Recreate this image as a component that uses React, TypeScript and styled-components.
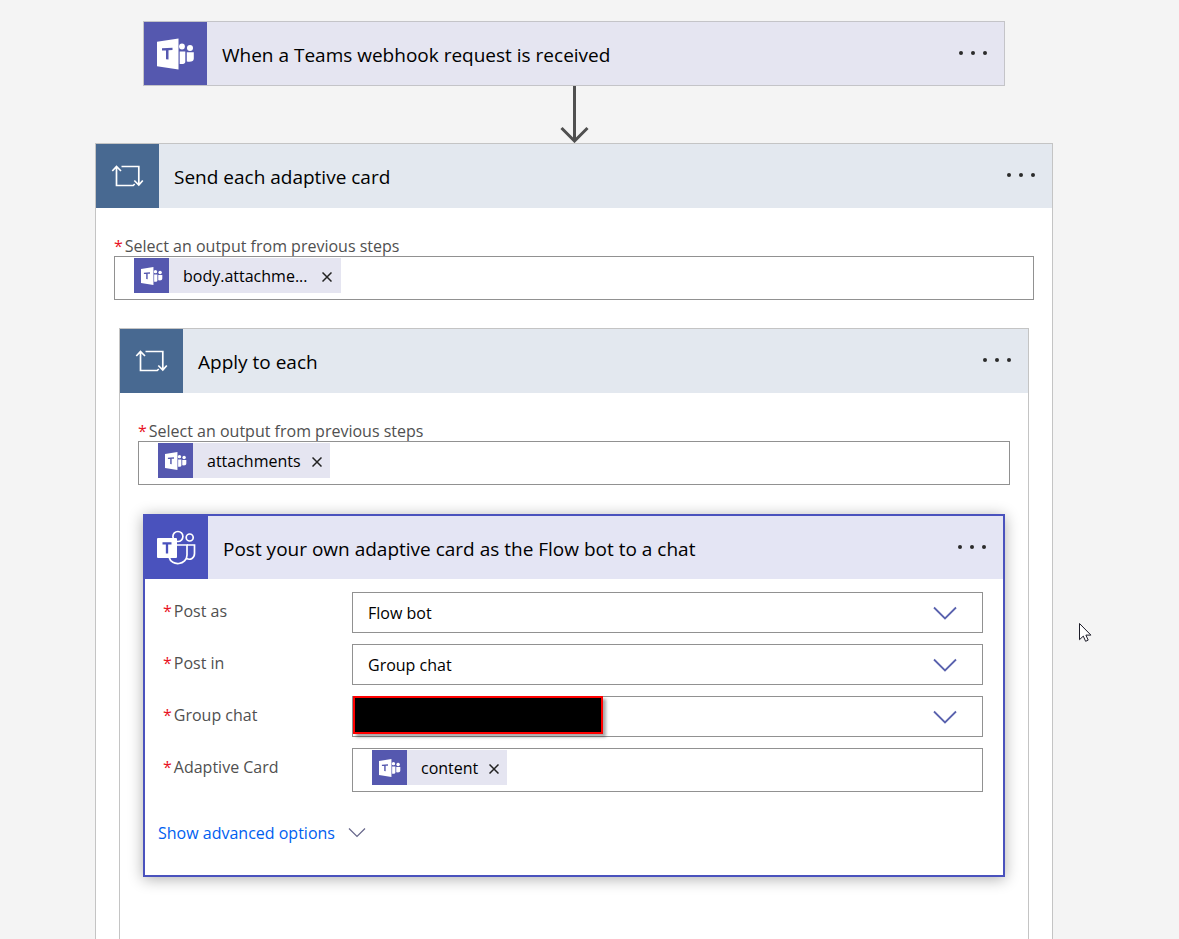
import React from "react";
import styled, { createGlobalStyle } from "styled-components";

const GlobalStyle = createGlobalStyle`
  *, *::before, *::after { box-sizing: border-box; }
  body {
    margin: 0;
    background: #f4f4f4;
    color: #000;
    font-family: "Open Sans", "Noto Sans", sans-serif;
    font-size: 16px;
    font-weight: 370;
    line-height: 22px;
  }
  button, input, select { font: inherit; color: inherit; }
`;

const Designer = styled.main`
  position: relative;
  display: flex;
  flex-direction: column;
  align-items: center;
  min-height: 100vh;
  padding: 21px 31px 0 0;
`;

const Card = styled.section`
  width: 100%;
  max-width: 862px;
  border: 1px solid #c4c4c8;
`;

const Scope = styled.section<{ $root?: boolean }>`
  display: flex;
  flex: 1;
  flex-direction: column;
  width: 100%;
  max-width: ${(p) => (p.$root ? "958px" : "none")};
  border: 1px solid #c4c4c4;
  border-bottom: 0;
  background: #fff;
`;

const ScopeBody = styled.div<{ $nested?: boolean }>`
  display: flex;
  flex: 1;
  flex-direction: column;
  padding: ${(p) => (p.$nested ? 29 : 28)}px 23px 0;
`;

const ActionCard = styled.section`
  border: 2px solid #4a52bd;
  background: #fff;
  box-shadow: 0 2px 14px rgba(0, 0, 0, 0.32);
  margin-bottom: 62px;
`;

const Header = styled.header<{ $tint: string; $tall?: boolean }>`
  display: flex;
  align-items: center;
  height: ${(p) => (p.$tall ? 64 : 63)}px;
  padding-right: 12px;
  background: ${(p) => p.$tint};
`;

const IconTile = styled.span<{ $color: string }>`
  display: grid;
  place-items: center;
  align-self: stretch;
  flex: 0 0 63px;
  background: ${(p) => p.$color};
`;

const Title = styled.h2`
  flex: 1;
  margin: 0;
  padding: 2px 15px 0;
  font-size: 19px;
  line-height: 28px;
  font-weight: inherit;
`;

const MenuButton = styled.button`
  display: grid;
  place-items: center;
  width: 38px;
  height: 32px;
  padding: 0;
  border: 0;
  background: none;
`;

const OutputField = styled.div`
  padding: 28px 18px 0;
`;

const Label = styled.label`
  display: block;
  line-height: 20px;
  color: #505050;
`;

const Star = styled.span`
  margin-right: 2px;
  color: #e81123;
`;

const TokenBox = styled.div`
  display: flex;
  align-items: flex-start;
  height: 44px;
  padding: 1px 18px 0 19px;
  border: 1px solid #919191;
  background: #fff;
`;

const TokenChip = styled.span`
  display: flex;
  align-items: center;
  height: 35px;
  background: #e5e5f1;
`;

const TokenIcon = styled.span`
  display: grid;
  place-items: center;
  width: 35px;
  height: 35px;
  background: #5558af;
`;

const TokenText = styled.span`
  padding: 0 7px 0 14px;
`;

const RemoveButton = styled.button<{ $wide?: boolean }>`
  display: grid;
  place-items: center;
  width: ${(p) => (p.$wide ? 24 : 18)}px;
  height: 35px;
  padding: 2px 0 0;
  margin-right: ${(p) => (p.$wide ? 2 : 4)}px;
  border: 0;
  background: none;
`;

const TokenInput = styled.input`
  flex: 1;
  min-width: 0;
  height: 35px;
  border: 0;
  outline: 0;
  background: none;
`;

const Form = styled.div`
  display: grid;
  gap: 11px;
  padding: 13px 20px 0 18px;
`;

const FormRow = styled.div`
  display: grid;
  grid-template-columns: 189px 1fr;
`;

const RowLabel = styled(Label)`
  padding-top: 9px;
`;

const SelectBox = styled.div`
  position: relative;
  display: flex;
  align-items: center;
  height: 41px;
  border: 1px solid #919191;
`;

const Select = styled.select`
  width: 100%;
  height: 39px;
  padding: 0 60px 0 15px;
  border: 0;
  outline: 0;
  appearance: none;
  background: none;
`;

const SelectArrow = styled.svg`
  position: absolute;
  right: 25px;
  top: 13px;
  pointer-events: none;
`;

const Redaction = styled.span`
  position: absolute;
  left: 0;
  top: -1px;
  width: 250px;
  height: 38px;
  border: 2px solid #f00;
  background: #000;
  box-shadow: 3px 3px 3px rgba(0, 0, 0, 0.35);
`;

const AdvancedButton = styled.button`
  display: flex;
  align-items: center;
  gap: 13px;
  margin: 30px 0 31px 13px;
  padding: 0;
  border: 0;
  background: none;
  color: #0060f0;
`;

const Pointer = styled.svg`
  position: absolute;
  left: 1078px;
  top: 622px;
`;

const TeamsClassic = ({ size }: { size: number }) => (
  <svg width={size} height={size} viewBox="0 0 38 38" aria-hidden="true">
    <path fill="#fff" d="M0 6.800 21.500 3.500v31L0 31.200z" />
    <path fill="#5558af" d="M5 13.200 15.500 12.700v2.400l-4 .2v9.200l-2.500-.2v-8.900l-4 .2z" />
    <circle cx="25" cy="11.500" r="2.900" fill="#fff" />
    <circle cx="33" cy="13" r="3" fill="#fff" />
    <path fill="#fff" d="M22.700 16.500h5.600v10.200c0 1.800-1.600 2.600-5.600 2.300zM29.800 17.300h7v6.200c0 2.700-2.500 3.700-7 3z" />
  </svg>
);

const TeamsOutline = () => (
  <svg width="40" height="36" viewBox="0 0 40 36" fill="none" stroke="#fff" strokeWidth="1.700" aria-hidden="true">
    <circle cx="20.900" cy="6.500" r="5" />
    <circle cx="32.700" cy="7.500" r="3.500" />
    <path d="M20 15h10v10c0 10-15.500 12-18 2v-2" />
    <path d="M30 15h7.500v8.500c0 4.500-4 7-8 5" />
    <rect x="0" y="8" width="20" height="20" rx="1" fill="#fff" stroke="none" />
    <path d="M5.500 13.300h9M10 13v10.500" stroke="#4a52bd" strokeWidth="2.300" />
  </svg>
);

const LoopIcon = () => (
  <svg width="33" height="24" viewBox="0 0 33 24" fill="none" stroke="#fff" strokeWidth="1.700" aria-hidden="true">
    <path d="M5.500 3v18.500h16.700l1.500-1.500M1.300 7l4.200-4.500L10 7" />
    <path d="M10.500 2.500h17.300v18M23.300 16.500l4.500 4.500 4-4.500" />
  </svg>
);

const More = () => (
  <MenuButton type="button" aria-label="Menu">
    <svg width="30" height="6" viewBox="0 0 30 6" fill="#2b2b2b" aria-hidden="true">
      <circle cx="3" cy="2" r="2" />
      <circle cx="15" cy="2" r="2" />
      <circle cx="27" cy="2" r="2" />
    </svg>
  </MenuButton>
);

const Token = ({ text, wide }: { text: string; wide?: boolean }) => (
  <TokenChip>
    <TokenIcon>
      <TeamsClassic size={22} />
    </TokenIcon>
    <TokenText>{text}</TokenText>
    <RemoveButton type="button" aria-label={`Remove ${text}`} $wide={wide}>
      <svg width="10" height="10" viewBox="0 0 10 10" stroke="#222" strokeWidth="1.500" aria-hidden="true">
        <path d="m.5.5 9 9m0-9-9 9" />
      </svg>
    </RemoveButton>
  </TokenChip>
);

const OutputSelector = ({ id, token, wide }: { id: string; token: string; wide?: boolean }) => (
  <OutputField>
    <Label htmlFor={id}>
      <Star>*</Star>Select an output from previous steps
    </Label>
    <TokenBox>
      <Token text={token} wide={wide} />
      <TokenInput id={id} />
    </TokenBox>
  </OutputField>
);

const SelectRow = ({ id, label, value, redacted }: { id: string; label: string; value: string; redacted?: boolean }) => (
  <FormRow>
    <RowLabel htmlFor={id}>
      <Star>*</Star>{label}
    </RowLabel>
    <SelectBox>
      <Select id={id} defaultValue={value}>
        <option value={value}>{value}</option>
      </Select>
      <SelectArrow width="24" height="14" viewBox="0 0 24 14" fill="none" stroke="#5a62ae" strokeWidth="1.800" aria-hidden="true">
        <path d="m1 1.500 11 11 11-11" />
      </SelectArrow>
      {redacted && <Redaction />}
    </SelectBox>
  </FormRow>
);

export default function App() {
  return (
    <>
      <GlobalStyle />
      <Designer>
        <Card>
          <Header $tint="#e5e5f1">
            <IconTile $color="#5558af">
              <TeamsClassic size={38} />
            </IconTile>
            <Title>When a Teams webhook request is received</Title>
            <More />
          </Header>
        </Card>
        <svg width="30" height="57" viewBox="0 0 30 57" fill="none" stroke="#505050" strokeWidth="3" aria-hidden="true">
          <path d="M15.500 0v55M2.500 42l13 13 13-13" />
        </svg>
        <Scope $root>
          <Header $tint="#e3e8ef" $tall>
            <IconTile $color="#486991">
              <LoopIcon />
            </IconTile>
            <Title>Send each adaptive card</Title>
            <More />
          </Header>
          <OutputSelector id="send-each-output" token="body.attachme..." wide />
          <ScopeBody>
            <Scope>
              <Header $tint="#e3e8ef" $tall>
                <IconTile $color="#486991">
                  <LoopIcon />
                </IconTile>
                <Title>Apply to each</Title>
                <More />
              </Header>
              <OutputSelector id="apply-each-output" token="attachments" />
              <ScopeBody $nested>
                <ActionCard>
                  <Header $tint="#e4e5f4">
                    <IconTile $color="#4a52bd">
                      <TeamsOutline />
                    </IconTile>
                    <Title>Post your own adaptive card as the Flow bot to a chat</Title>
                    <More />
                  </Header>
                  <Form>
                    <SelectRow id="post-as" label="Post as" value="Flow bot" />
                    <SelectRow id="post-in" label="Post in" value="Group chat" />
                    <SelectRow id="group-chat" label="Group chat" value="" redacted />
                    <FormRow>
                      <RowLabel htmlFor="adaptive-card">
                        <Star>*</Star>Adaptive Card
                      </RowLabel>
                      <TokenBox>
                        <Token text="content" />
                        <TokenInput id="adaptive-card" />
                      </TokenBox>
                    </FormRow>
                  </Form>
                  <AdvancedButton type="button">
                    Show advanced options
                    <svg width="18" height="10" viewBox="0 0 18 10" fill="none" stroke="#66668a" strokeWidth="1.200" aria-hidden="true">
                      <path d="m1 .5 8 8 8-8" />
                    </svg>
                  </AdvancedButton>
                </ActionCard>
              </ScopeBody>
            </Scope>
          </ScopeBody>
        </Scope>
        <Pointer width="14" height="21" viewBox="0 0 14 21" aria-hidden="true">
          <path d="M1.500 1.500v16.200l3.800-3.600 2.300 5.200 2.600-1.200-2.300-5h5z" fill="#fff" stroke="#1c1c28" strokeWidth="1" />
        </Pointer>
      </Designer>
    </>
  );
}
